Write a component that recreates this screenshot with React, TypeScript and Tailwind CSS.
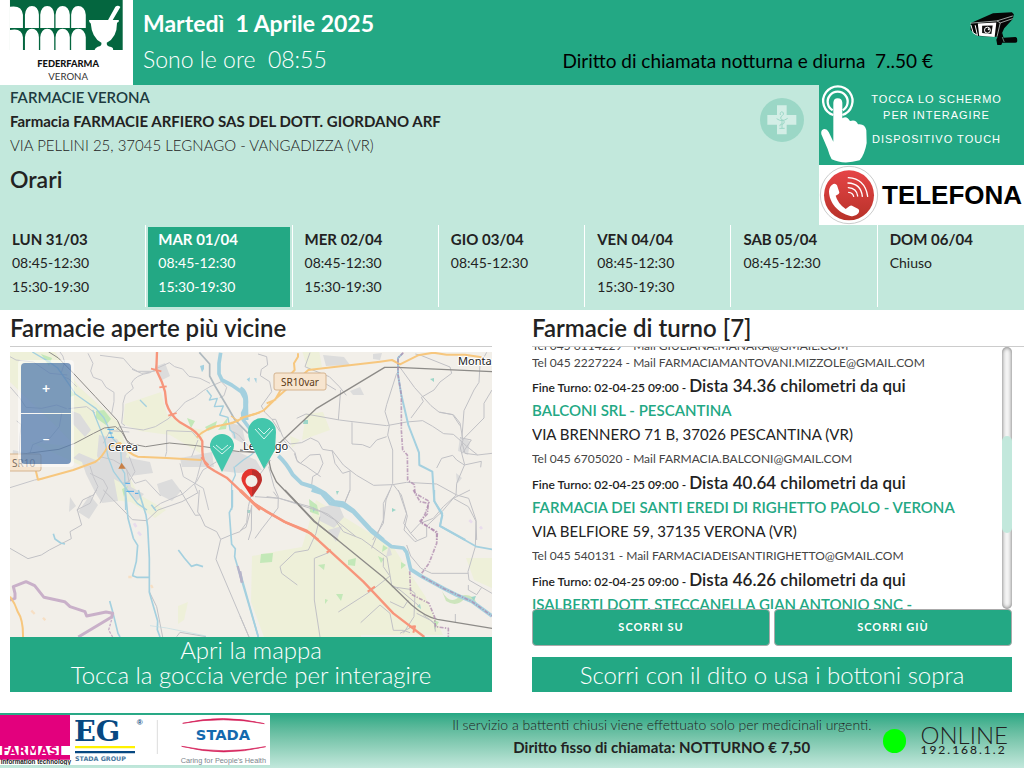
import { useRef } from "react";

type Day = {
  label: string;
  hours: string[];
  today?: boolean;
};

type Pharmacy = {
  name: string;
  address: string;
  contact: string;
  distance: string;
};

const days: Day[] = [
  { label: "LUN 31/03", hours: ["08:45-12:30", "15:30-19:30"] },
  { label: "MAR 01/04", hours: ["08:45-12:30", "15:30-19:30"], today: true },
  { label: "MER 02/04", hours: ["08:45-12:30", "15:30-19:30"] },
  { label: "GIO 03/04", hours: ["08:45-12:30"] },
  { label: "VEN 04/04", hours: ["08:45-12:30", "15:30-19:30"] },
  { label: "SAB 05/04", hours: ["08:45-12:30"] },
  { label: "DOM 06/04", hours: ["Chiuso"] },
];

const pharmacies: Pharmacy[] = [
  {
    name: "BALCONI SRL - PESCANTINA",
    address: "VIA BRENNERO 71 B, 37026 PESCANTINA (VR)",
    contact: "Tel 045 6705020 - Mail FARMACIA.BALCONI@GMAIL.COM",
    distance: "40.64",
  },
  {
    name: "FARMACIA DEI SANTI EREDI DI RIGHETTO PAOLO - VERONA",
    address: "VIA BELFIORE 59, 37135 VERONA (VR)",
    contact: "Tel 045 540131 - Mail FARMACIADEISANTIRIGHETTO@GMAIL.COM",
    distance: "46.26",
  },
];

export default function App() {
  const list = useRef<HTMLDivElement>(null);
  const scroll = (top: number) => list.current?.scrollBy({ top, behavior: "smooth" });

  return (
    <div className="bg-white font-['Lato',sans-serif] text-[#222]">
      <Header />
      <PharmacyInfo />
      <Schedule />

      <main className="grid grid-cols-2">
        <section className="pl-[10px] pr-5">
          <h2 className="border-b border-[#ccc] text-2xl font-semibold leading-9">Farmacie aperte più vicine</h2>
          <div className="relative mt-[5px] h-[285px] overflow-hidden bg-[#f2efe9]">
            <AreaMap />
            <div className="absolute left-2 top-2 flex flex-col gap-px rounded bg-white/50 p-[3px] text-sm font-bold text-white">
              <button type="button" className="h-[50px] w-[50px] rounded-t-sm bg-[#003c88]/50">+</button>
              <button type="button" className="h-[50px] w-[50px] rounded-b-sm bg-[#003c88]/50">–</button>
            </div>
          </div>
          <div className="bg-[#23a884] pb-[5px] text-center text-2xl font-light leading-[25px] text-white">
            <p>Apri la mappa</p>
            <p>Tocca la goccia verde per interagire</p>
          </div>
        </section>

        <section className="pl-5">
          <h2 className="border-b border-[#ccc] text-2xl font-semibold leading-9">Farmacie di turno [7]</h2>
          <div className="mr-3 flex h-[262px]">
            <div ref={list} className="min-w-0 flex-1 overflow-hidden">
              <div className="-mt-[10px] pb-[2px] text-xs leading-[17px] text-[#444]">
                <p>Tel 045 6114229 - Mail GIULIANA.MANARA@GMAIL.COM</p>
                <p>Tel 045 2227224 - Mail FARMACIAMANTOVANI.MIZZOLE@GMAIL.COM</p>
              </div>
              <ShiftEnd distance="34.36" />
              {pharmacies.map((pharmacy) => (
                <PharmacyItem key={pharmacy.name} {...pharmacy} />
              ))}
              <h3 className="text-[15px] font-semibold leading-6 text-[#23a884]">
                ISALBERTI DOTT. STECCANELLA GIAN ANTONIO SNC -
              </h3>
            </div>
            <div className="w-[10px] rounded-full bg-[#f5f5f5] pt-[89px] shadow-[inset_0_0_4px_rgba(0,0,0,0.6)]">
              <div className="h-[97px] rounded-full bg-[#c2e8dc]" />
            </div>
          </div>
          <div className="mr-3 grid grid-cols-2 gap-1">
            <ScrollButton label="SCORRI SU" onClick={() => scroll(-97)} />
            <ScrollButton label="SCORRI GIÙ" onClick={() => scroll(97)} />
          </div>
          <p className="mr-3 mt-[11px] bg-[#23a884] text-center text-2xl font-light leading-[35px] text-white">
            Scorri con il dito o usa i bottoni sopra
          </p>
        </section>
      </main>

      <Footer />
    </div>
  );
}

function Header() {
  return (
    <header className="flex h-[85px] bg-[#23a884]">
      <FederfarmaLogo />
      <div className="pl-[10px] pt-[5px] text-[23px] leading-9 text-white">
        <h1 className="whitespace-pre font-bold">Martedì  1 Aprile 2025</h1>
        <p className="whitespace-pre font-light">Sono le ore  08:55</p>
      </div>
      <div className="ml-auto flex">
        <p className="mt-auto whitespace-pre pb-[10px] pr-9 text-[19px] leading-7 text-black">
          Diritto di chiamata notturna e diurna  7..50 €
        </p>
        <CameraIcon />
      </div>
    </header>
  );
}

function PharmacyInfo() {
  return (
    <section className="flex h-[140px] bg-[#c2e8dc]">
      <div className="flex-1 pl-[10px] text-[15px] leading-6">
        <p className="font-semibold text-[#1c3b40]">FARMACIE VERONA</p>
        <p className="font-bold">Farmacia FARMACIE ARFIERO SAS DEL DOTT. GIORDANO ARF</p>
        <p className="font-light">VIA PELLINI 25, 37045 LEGNAGO - VANGADIZZA (VR)</p>
        <h2 className="mt-[2px] text-[23px] font-semibold leading-10">Orari</h2>
      </div>
      <CrossIcon />
      <div className="w-[205px] font-['Liberation_Sans',sans-serif]">
        <a href="#touch" className="flex h-20 bg-[#23a884] text-white">
          <TouchIcon />
          <span className="flex-1 whitespace-nowrap pr-5 pt-[6px] text-center text-[11px] leading-4 tracking-[1px]">
            <span className="block">TOCCA LO SCHERMO</span>
            <span className="block">PER INTERAGIRE</span>
            <span className="mt-2 block">DISPOSITIVO TOUCH</span>
          </span>
        </a>
        <a href="#telefona" className="flex h-[60px] items-center bg-white text-black">
          <PhoneIcon />
          <span className="pl-[3px] text-[26px] font-bold leading-8">TELEFONA</span>
        </a>
      </div>
    </section>
  );
}

function Schedule() {
  return (
    <section className="grid grid-cols-7 bg-[#c2e8dc] pb-[3px]">
      {days.map((day) => (
        <div key={day.label} className="h-[82px] border-r border-white px-[2px] pt-[2px] last:border-r-0">
          <div className={day.today ? "h-full bg-[#23a884] pl-[10px] leading-6 text-white" : "h-full pl-[10px] leading-6"}>
            <p className="text-[15px] font-bold">{day.label}</p>
            {day.hours.map((hour) => (
              <p key={hour} className="text-sm leading-6">{hour}</p>
            ))}
          </div>
        </div>
      ))}
    </section>
  );
}

function ShiftEnd({ distance }: { distance: string }) {
  return (
    <p className="h-[25px] text-[17px] font-semibold leading-[25px]">
      <span className="text-xs leading-none">Fine Turno: 02-04-25 09:00 - </span>
      Dista {distance} chilometri da qui
    </p>
  );
}

function PharmacyItem({ name, address, contact, distance }: Pharmacy) {
  return (
    <article className="text-[15px] leading-6">
      <h3 className="font-semibold text-[#23a884]">{name}</h3>
      <p>{address}</p>
      <p className="pb-[3px] pt-1 text-xs leading-[17px] text-[#444]">{contact}</p>
      <ShiftEnd distance={distance} />
    </article>
  );
}

function ScrollButton({ label, onClick }: { label: string; onClick: () => void }) {
  return (
    <button
      type="button"
      onClick={onClick}
      className="h-[37px] rounded border border-[#aaa] bg-[#23a884] text-[11px] font-bold tracking-[1px] text-white"
    >
      {label}
    </button>
  );
}

function Footer() {
  return (
    <footer className="mt-[21px] flex h-[55px] bg-gradient-to-b from-[#23a884] to-[#c2e8dc]">
      <SponsorLogos />
      <div className="ml-auto pr-3 text-center leading-[23px]">
        <p className="text-sm font-light leading-[23px]">
          Il servizio a battenti chiusi viene effettuato solo per medicinali urgenti.
        </p>
        <p className="text-[15px] font-bold">Diritto fisso di chiamata: NOTTURNO € 7,50</p>
      </div>
      <span className="mt-4 h-6 w-[23px] rounded-full bg-[#0f0]" />
      <div className="ml-[14px] mr-4 pt-3">
        <p className="text-2xl font-light leading-5">ONLINE</p>
        <p className="text-xs font-medium leading-[10px] tracking-[2px]">192.168.1.2</p>
      </div>
    </footer>
  );
}

function FederfarmaLogo() {
  return (
    <svg viewBox="0 0 400 255" className="h-[85px] w-[133px] shrink-0 bg-white">
      <path d="M30 0H369V150H30Z" fill="#04663f" />
      <g fill="#fff">
        <path d="M30 20Q66 14 69 44V84H30ZM75 84V44Q78 18 96 18Q115 18 117 44V84ZM121 84V44Q124 18 142 18Q161 18 163 44V84ZM167 84V44Q170 18 188 18Q207 18 210 44V84ZM214 84V44Q217 18 235 18Q255 18 258 44V84Z" />
        <path d="M30 90Q66 82 69 112V151H30ZM75 151V112Q78 86 96 86Q115 86 117 112V151ZM121 151V112Q124 86 142 86Q161 86 163 112V151ZM167 151V112Q170 86 188 86Q207 86 210 112V151ZM214 151V112Q217 86 235 86Q255 86 258 112V151Z" />
        <path d="M268 60H325L347 20Q355 14 362 21L339 60H357Q359 67 352 68Q352 113 321 128Q320 139 334 141Q342 144 340 151H284Q286 143 294 140Q307 138 305 128Q276 113 273 70Q267 67 268 60Z" />
      </g>
      <text x="205" y="201" textAnchor="middle" fontSize="28" fontWeight="900" fill="#111">FEDERFARMA</text>
      <text x="205" y="239" textAnchor="middle" fontSize="29" fill="#333">VERONA</text>
    </svg>
  );
}

function CameraIcon() {
  return (
    <svg viewBox="1228 34 150 106" className="mr-[5px] mt-[11px] h-[35px] w-[50px]">
      <path d="M1233 70L1300 41L1357 38L1363 44L1360 58L1334 86L1322 113L1252 110L1232 91Z" fill="#050505" />
      <path d="M1231 71L1312 64L1360 49M1312 64L1322 70L1360 57M1322 70L1312 112" fill="none" stroke="#e8f5f0" strokeWidth="2" />
      <path d="M1254 72L1310 69L1305 113L1258 109Z" fill="#fff" />
      <path d="M1233 76L1240 100L1253 108L1246 77" fill="none" stroke="#fff" strokeWidth="3" />
      <path d="M1267 79L1299 78L1295 104L1267 101Z" fill="#111" />
      <circle cx="1283" cy="92" r="9" fill="none" stroke="#fff" strokeWidth="3" />
      <circle cx="1287" cy="89" r="3" fill="#fff" />
      <path d="M1314 112L1328 101L1332 115L1368 113Q1375 114 1373 127Q1372 131 1364 130L1328 130L1325 137H1313L1310 121Z" fill="#050505" />
      <path d="M1328 113L1334 128" stroke="#8ecdb8" strokeWidth="2" />
    </svg>
  );
}

function CrossIcon() {
  return (
    <svg viewBox="0 0 132 132" className="mr-[15px] mt-[13px] h-11 w-11 shrink-0">
      <circle cx="66" cy="66" r="66" fill="#9bd7c6" />
      <path d="M51 22H80V51H109V80H80V109H51V80H22V51H51Z" fill="#d3eee6" />
      <g fill="none" stroke="#9bd7c6" strokeWidth="3">
        <path d="M50 62Q66 74 83 61M66 65V91M58 91H74" />
        <path d="M61 51C59 40 68 39 70 45C73 53 62 52 62 60C64 69 75 65 72 75C69 83 59 73 60 85" />
      </g>
    </svg>
  );
}

function TouchIcon() {
  return (
    <svg viewBox="777 255 150 240" className="h-20 w-[50px] shrink-0">
      <g fill="none" stroke="#fff" strokeWidth="7">
        <path d="M820 345A44 44 0 1 1 847 345" />
        <path d="M818 331A30 30 0 1 1 848 331" />
      </g>
      <path d="M820 438V308Q821 295 833 295Q846 295 847 308V355Q860 345 870 363Q888 357 894 373Q915 370 919 391L920 429Q914 464 899 481Q850 495 815 478Q809 468 803 447L784 403Q782 391 790 388Q800 385 806 396L820 425Z" fill="#fff" />
    </svg>
  );
}

function PhoneIcon() {
  return (
    <svg viewBox="0 0 180 180" className="h-[60px] w-[60px] shrink-0">
      <defs>
        <linearGradient id="phone-red" x2="0" y2="1">
          <stop stopColor="#e54446" />
          <stop offset="1" stopColor="#b83229" />
        </linearGradient>
      </defs>
      <circle cx="90" cy="90" r="86" fill="#fff" stroke="#ccc" strokeWidth="3" />
      <circle cx="90" cy="91" r="75" fill="url(#phone-red)" />
      <path d="M43 57Q50 54 54 61L61 82Q62 87 50 92Q56 115 80 132L92 123Q97 120 102 124L118 132Q123 137 118 145Q110 156 94 153C57 145 30 112 30 79Q31 63 43 57Z" fill="#fff" />
      <g fill="none" stroke="#fff" strokeWidth="4" strokeLinecap="round">
        <path d="M88 38Q138 41 146 94" />
        <path d="M87 54Q126 56 130 94" />
        <path d="M88 68Q113 70 116 93" />
        <path d="M89 82Q101 83 104 94" />
      </g>
    </svg>
  );
}

function SponsorLogos() {
  return (
    <svg viewBox="0 0 810 150" className="mt-[2px] h-[50px] w-[270px] shrink-0">
      <path d="M0 0H810V150H0Z" fill="#fff" />
      <path d="M0 0H210V134H0Z" fill="#e3007d" />
      <path d="M0 93H210V120H0Z" fill="#fff" />
      <g fontFamily="DejaVu Sans" fontWeight="700">
        <text x="3" y="120" fontSize="37" fill="#e3007d">FARMASI</text>
        <text x="225" y="139" fontSize="19" fill="#47779e">STADA GROUP</text>
        <text x="669" y="74" textAnchor="middle" fontSize="44" fill="#1469ae">STADA</text>
      </g>
      <text x="2" y="148" fontSize="19" fontFamily="Liberation Sans" fontWeight="700" fill="#222">information technology</text>
      <text x="222" y="77" fontFamily="DejaVu Serif" fontSize="86" fontWeight="700" fill="#074881">EG</text>
      <text x="410" y="31" fontFamily="Liberation Sans" fontSize="24" fontWeight="700" fill="#074881">®</text>
      <path d="M225 93H405V100H225Z" fill="#fff200" />
      <path d="M225 108H405V115H225Z" fill="#074881" />
      <path d="M472 15V117" stroke="#ddd" strokeWidth="3" />
      <path d="M548 25Q670-4 793 26Q670 3 548 25ZM545 94Q670 120 797 95Q670 127 545 94Z" fill="#d51f59" stroke="#d51f59" strokeWidth="2" />
      <text x="670" y="144" textAnchor="middle" fontFamily="Liberation Sans" fontSize="22" fill="#7b858c">Caring for People's Health</text>
    </svg>
  );
}

function DropPin({ x, y }: { x: number; y: number }) {
  return (
    <g transform={`translate(${x} ${y})`}>
      <path d="M0 0L-10 -20Q-12 -23 -12 -26A12 12 0 1 1 12 -26Q12 -23 10 -20Z" fill="#43c6ac" />
      <path d="M-9 -26L0 -18L9 -26M-6 -27L0 -22L6 -27" fill="none" stroke="#d5f4ed" strokeWidth="1" />
    </g>
  );
}

// The map is drawn as four quadrants, each in units of a third of a pixel
function AreaMap() {
  return (
    <svg viewBox="0 0 482 285" preserveAspectRatio="xMidYMid slice" className="h-full w-full" fontFamily="Noto Sans">
      <g fill="#eef0d9">
        <path d="M0 0H45L69 35L108 70L122 113L98 130L75 105L48 76L0 30ZM115 52L151 40L157 62L177 75L194 78L190 101L160 83L130 79L113 72ZM82 118L112 110L128 142L156 158L145 166L121 150L93 147ZM20 90L88 97L84 120L57 107Z" />
        <path d="M306 148L342 170L384 196L396 215L415 244L433 283H350L326 258L348 265L351 285H254L241 250L242 204L269 199L292 195ZM456 206H482V236L464 228Z" />
        <path d="M290 -8L309 -2L312 15L298 18ZM296 62L313 60L320 78L292 88ZM280 84L290 88L282 96Z" />
        <path d="M168 254L178 250L174 268L168 272Z" />
      </g>
      <g fill="#dcdcdc">
        <path d="M62 59L70 62L81 78L75 85L63 72ZM89 83L107 87L117 102L110 120L95 119L87 104ZM147 14L155 11L160 24L150 29ZM95 112L114 105L140 110L143 121L120 124L121 135L134 142L127 149L113 132L104 127L108 149L92 151L85 140L76 122L72 110L63 106L69 101ZM170 106L202 100L204 115L172 115ZM147 132L162 127L171 139L162 149L150 143ZM218 70L232 74L236 93L223 86ZM208 110L224 98L246 108L252 118L229 121L211 119Z" />
        <path d="M310 156L328 151L334 165L324 176L310 169ZM318 178L332 174L326 190ZM313 3L334 5L340 13L316 14ZM363 2L372 1L370 8L363 7ZM340 39L350 35L354 43L343 43ZM450 85L460 89L458 103L448 99ZM446 121L452 126L447 132ZM379 193L382 203L376 205ZM68 160L80 143L88 153L79 167Z" />
        <path d="M3 98L16 101L8 113L2 107ZM60 145L66 154L59 160Z" />
      </g>
      <g fill="#c3e8b8">
        <path d="M86 59L94 58L101 67L96 73L86 66ZM177 66L185 69L181 76ZM195 75L207 69L205 76L198 79ZM208 78L218 65L216 77ZM112 137L118 134L114 145ZM60 37L65 43L60 45ZM31 2L42 6L39 14Z" />
        <path d="M299 147L307 153L309 163L300 160ZM338 208L346 206L345 214L338 213ZM251 202L263 201L262 210L250 211ZM326 242L333 242L331 249ZM373 193L378 196L372 200ZM391 210L396 213L391 217ZM368 204L374 207L371 211ZM308 213L315 212L314 218ZM424 268L429 270L424 278ZM315 247L318 248L315 252Z" />
        <path d="M432 239Q440 254 450 244L455 243Q464 243 467 252L455 246Q447 256 436 249Z" fill="#cde5bd" />
      </g>
      <g fill="#9dd6c9">
        <path d="M294 68H298V72H293ZM326 139L329 139L327 143ZM303 155L306 157L303 160ZM382 156L386 158L382 160ZM461 245L466 244L464 249ZM407 254L410 252L411 257ZM237 158H240V161H237ZM420 27L424 26L424 30Z" />
      </g>

      {/* north-west */}
      <g transform="translate(-10 -42) scale(.333333)" fill="none" strokeLinejoin="round">
        <g stroke="#c6c6ca" strokeWidth="3">
          <path d="M30 140L48 150L100 156L150 190L202 195M30 230L60 265L78 292L125 295L170 285L200 296M90 430L98 404L150 384L178 350L185 310M180 126Q190 135 194 157L184 188M264 130L279 160L272 183L280 202L305 211L318 232L342 247V275L335 311M300 136L370 145L396 175L413 184H464L470 160M396 178L425 190L449 187M394 220Q405 195 450 188L466 179M394 220L400 235L376 255L369 280V300L365 340L375 347M350 360L358 350L430 360L466 350L504 327L534 300L556 276L584 262L610 242L630 230L664 215L680 232L672 257L659 263M460 180L508 158L524 170L548 177L567 199L600 205L630 220M500 362L576 365L594 386M500 362V425L496 440M594 390L575 440M610 430L592 500L584 525L594 550M650 455L609 480L590 515L548 552L482 580L460 596M540 460L550 500L585 520L610 535L626 600M388 440L405 485L387 515L367 520M380 478L387 515M30 533L104 510L135 505M270 468L280 500L294 530L286 545L270 580L230 600M300 440L340 450L374 470L405 520L437 510L482 558M700 365L716 375L760 425M700 428L690 420L660 430M270 490L310 510L323 534L300 580" />
          <path d="M50 333L64 344L60 376L58 429M190 200L207 207L230 230M205 296L260 290L285 309M310 400L330 362L388 366" />
        </g>
        <path d="M598 127L629 162V198L645 228L688 300L705 330L744 370" stroke="#afb9bf" strokeWidth="5" />
        <path d="M97 126L145 154L173 174L205 220L226 252L260 276L288 296L312 324L327 356L337 384L352 400L362 417L365 475L374 490L377 600M278 300L314 390L324 440L341 485L375 531L412 580L441 600" stroke="#a4d0df" strokeWidth="4" />
        <path d="M662 128L657 160V191L666 210L695 225L724 245L736 267L737 290L728 310L730 330L750 357L780 400" stroke="#a4d0df" strokeWidth="11" />
        <path d="M620 240L634 258L628 270L652 265L643 290L670 288L659 315L684 322L690 360L702 370L705 385M705 470L730 450L753 435L780 410M695 520L706 495L702 470M695 520V600M420 270L440 290" stroke="#a4d0df" strokeWidth="4" />
        <path d="M322 358H342M326 369H338M324 382H342M376 520H390M376 544H402M405 550H416" stroke="#43a6e8" strokeWidth="3" />
        <path d="M600 168L612 164V177L606 187ZM740 208L750 202L748 216ZM762 204L770 205L769 220Z" fill="#a4d0df" />
        <path d="M104 468L114 509L220 480L285 456Q305 445 323 410L360 399Q390 435 414 440L500 444L604 450M590 382Q620 352 664 346L700 338L735 321L780 307" stroke="#f7c77e" strokeWidth="6" />
        <path d="M693 318L715 333L692 338" stroke="#f7c77e" strokeWidth="4" />
        <path d="M30 439L83 430L177 418L224 400L281 370L313 354L347 350L366 367L385 400L437 410L508 399L590 407L719 425L780 428M145 125L175 144L213 182L286 260L352 331L380 390L396 405" stroke="#8d8b88" strokeWidth="3" />
        <path d="M471 126L469 180L486 217L495 245L499 280Q510 315 540 337L573 356Q596 371 607 394V420Q607 455 624 470L644 483L680 503L717 538L780 600" stroke="#f7957b" strokeWidth="7" />
        <path d="M453 176L484 184M478 232L500 229M505 317L530 309M603 442L626 465" stroke="#f7957b" strokeWidth="5" />
        <path d="M355 476L365 458L377 476Z" fill="#c88046" />
      </g>

      {/* north-east */}
      <g transform="translate(230 -12) scale(.333333)" fill="none" strokeLinejoin="round">
        <g stroke="#c1c1c5" strokeWidth="3">
          <path d="M54 42L80 50L83 75L64 88L61 107L89 125L95 155L64 198L75 217L96 238L120 275M210 38L195 80L218 90L268 110L298 140L319 166M302 150L295 240M205 100L288 150M170 235L198 222L298 240L330 244L440 257L500 246L548 242L578 259L611 281L640 283L665 305L675 340L713 345L756 340M96 238L107 238L128 289L150 312L185 308L212 294L235 305L248 328L278 333L310 375L350 406L401 436L458 434L500 427L590 432L650 465L686 475L708 540L710 600M336 247V312L367 314L390 323L410 300L440 290M276 330L285 370L308 400L330 393L330 450L314 490M163 340L170 360L181 370L210 345L240 343L249 370L235 400L218 410L215 435M130 300L165 338L172 365L198 379L242 410M470 100L440 194L435 215L448 257L443 285L458 330V430L438 480L430 550L398 600M460 434L484 465L500 520L491 550L512 580L530 600M526 42L545 47L630 81L635 100L600 126L582 150L544 172L550 184L513 234M477 78L524 143L573 197L598 217L640 224L660 249L669 301L661 324L674 374L650 430L648 466L610 500L580 535L540 550L512 580M666 290L672 212L702 150L717 127L720 73L740 37M666 301L732 234V190L756 150M665 305L680 319L713 345M590 384L605 355L638 346L650 360L673 375L724 364L722 382M660 293L694 300L667 340M598 216L638 224L660 257M45 595L65 567L114 504L115 470L102 440L86 380M25 600L34 570L35 495M80 470L118 475L210 500L265 523L348 590M40 470L47 420L92 360" />
        </g>
        <path d="M115 347Q140 370 158 404L185 430L220 441L254 460L282 486L310 490L340 512L390 566L430 600" stroke="#a4d0df" strokeWidth="12" />
        <path d="M488 40L474 54V104L484 165L505 255L537 338L538 375L577 395L583 484L607 526L600 558L676 600" stroke="#a4d0df" strokeWidth="6" />
        <path d="M0 146Q20 155 17 195L18 240" stroke="#a4d0df" strokeWidth="15" />
        <path d="M0 235L43 223L70 212L107 176L124 161L205 90L250 85L420 65L456 60L480 73L534 46L580 38L620 44L675 44L725 52M174 40V50L162 70L164 90L145 110L107 176M80 190L108 178" stroke="#f7c77e" strokeWidth="6" />
        <path d="M0 330L60 340L120 308L230 205L434 82L470 82L756 95M84 350L93 391L109 425L223 545L294 600" stroke="#8d8b88" strokeWidth="4" />
        <path d="M490 38L474 54V104L484 165V270L488 330L502 345L503 420L523 434L525 460L568 484L556 520L542 548L590 575V600" stroke="#ad8aad" strokeWidth="5" strokeDasharray="12 4 4 4" opacity=".75" />
        <path d="M0 450L42 490L80 515L130 544L200 572L235 600" stroke="#f7957b" strokeWidth="7" />
      </g>

      {/* south-west */}
      <g transform="translate(-10 138) scale(.333333)" fill="none" strokeLinejoin="round">
        <g stroke="#c1c1c5" strokeWidth="3">
          <path d="M30 175L84 206L124 195L148 180L214 146L210 125L245 105L232 60L248 30L280 15L290 0M310 0L340 30L397 89L440 92L474 60L546 35L594 8M540 0L586 76L600 75L615 108L650 125L662 148L648 208L747 441M598 0L593 66L600 75M662 148L695 134L720 125L740 98L745 50L753 15M448 305L470 350L480 400L488 441M530 440L540 427L618 440" />
        </g>
        <path d="M376 0L384 85L400 145L413 166L409 214L398 257L410 262H447M415 0L438 75L443 110L448 205V307L473 393L472 419L480 441M454 44L468 62M160 131L165 147L182 159L195 162M535 180L553 204L574 229L590 224L609 230M697 0V50L688 68L695 163L706 176L704 200L775 441M329 333L338 365L354 430L360 441" stroke="#a4d0df" strokeWidth="5" />
        <path d="M450 407L500 414L618 438" stroke="#c0dce3" strokeWidth="2" />
        <path d="M30 330L45 325V310L40 290L78 275L104 287L132 322L194 335L210 350L255 365L260 378L318 366L338 370L335 381L235 441" stroke="#c9b0c9" strokeWidth="9" />
        <path d="M338 378L326 420L338 441" stroke="#c9b0c9" strokeWidth="4" strokeDasharray="8 4" />
        <path d="M713 228L726 276" stroke="#b6b3c9" strokeWidth="7" />
        <path d="M30 320Q45 340 53 365Q70 390 69 441" stroke="#f7c77e" strokeWidth="6" />
        <path d="M402 100L409 111M414 126L423 136" stroke="#e9dced" strokeWidth="8" />
        <path d="M94 362L104 372M129 383L136 391M385 261H395M453 285L458 294" stroke="#f7dfc4" strokeWidth="7" />
        <path d="M722 0L780 58" stroke="#f7957b" strokeWidth="7" />
      </g>

      {/* south-east */}
      <g transform="translate(230 138) scale(.333333)" fill="none" strokeLinejoin="round">
        <g stroke="#c1c1c5" strokeWidth="3">
          <path d="M0 122L18 112L35 50M240 80L228 130L205 180L165 187L120 230L125 250L172 285M45 20L118 25L180 45L245 66L285 90L310 125L365 147L441 202L455 285L480 300L540 350M268 187L223 205V330L240 441M295 366L390 305L450 258M362 398L420 345L450 370L460 421H490L510 428M430 203V230L448 256M450 335L490 354L505 330M395 175L430 90V40L450 0M475 0L502 78L492 120L525 155L560 140V108L606 65L640 25L685 50L708 94L706 170L684 245L687 270L756 310M685 285V300L710 314L725 292M640 25L690 0M500 165L512 198L543 235L575 250H684M455 290L510 298L525 310L522 380L490 430M115 25L100 5M330 0L315 35M550 375L585 400L586 425M646 372V398M530 370L570 390L592 410M480 430L520 408M0 378L27 441" />
        </g>
        <path d="M215 0L245 10L270 40L310 48L340 66L395 125L455 170L490 174L500 187L512 238L545 259L612 296L650 315L695 334L756 378" stroke="#a4d0df" strokeWidth="11" />
        <path d="M583 0V34L607 70L600 108L710 170L756 178M0 245L55 441" stroke="#a4d0df" strokeWidth="5" />
        <path d="M135 0L223 93L430 262L515 345Q555 380 592 388L756 415" stroke="#8d8b88" strokeWidth="4" />
        <path d="M520 0L540 35L565 40L562 72L540 93L592 130L590 160L567 220L545 250M509 244L512 312L567 340L584 382L586 410L625 415V441M545 259L612 296L695 334L756 378" stroke="#ad8aad" strokeWidth="5" strokeDasharray="12 4 4 4" opacity=".75" />
        <path d="M0 3L44 43L137 97L212 130L370 275L460 370L553 441" stroke="#f7957b" strokeWidth="7" />
        <path d="M383 305L405 290M508 411L525 409L520 428M260 188L272 179" stroke="#f7957b" strokeWidth="6" />
        <path d="M0 244L6 278" stroke="#b6b3c9" strokeWidth="8" />
        <path d="M688 90L696 98M720 110L726 117" stroke="#e9dced" strokeWidth="8" />
      </g>

      <g stroke="#d5b48f" fill="#f7e5cf">
        <path d="M-3 102H29Q31 102 31 104V117Q31 119 29 119H-3Z" />
        <rect x="264" y="21" width="52" height="17" rx="2" />
      </g>
      <g fill="#5b3a16" fontSize="10">
        <text x="2" y="115" fill="#7b6d61">SR10</text>
        <text x="271" y="34">SR10var</text>
      </g>
      <g fill="#222" stroke="#fff" strokeWidth="2" paintOrder="stroke" fontSize="11">
        <text x="98" y="99">Cerea</text>
        <text x="233" y="98">Legnago</text>
        <text x="448" y="13">Monta</text>
      </g>

      <DropPin x={212} y={120} />
      <path d="M254 117L240 90Q238 85 238 80A14 14 0 0 1 266 80L265 98Z" fill="#43c6ac" />
      <path d="M245 77L254 87L263 77M248 76L254 82L260 76" fill="none" stroke="#d5f4ed" />
      <path d="M241.500 145L233 132A10 10 0 1 1 250 132Z" fill="#e4352f" />
      <path d="M242 118Q252 119 252 128Q252 132 242 145Z" fill="#bd302c" />
      <circle cx="241.500" cy="129" r="6" fill="#f2efe9" />
    </svg>
  );
}
